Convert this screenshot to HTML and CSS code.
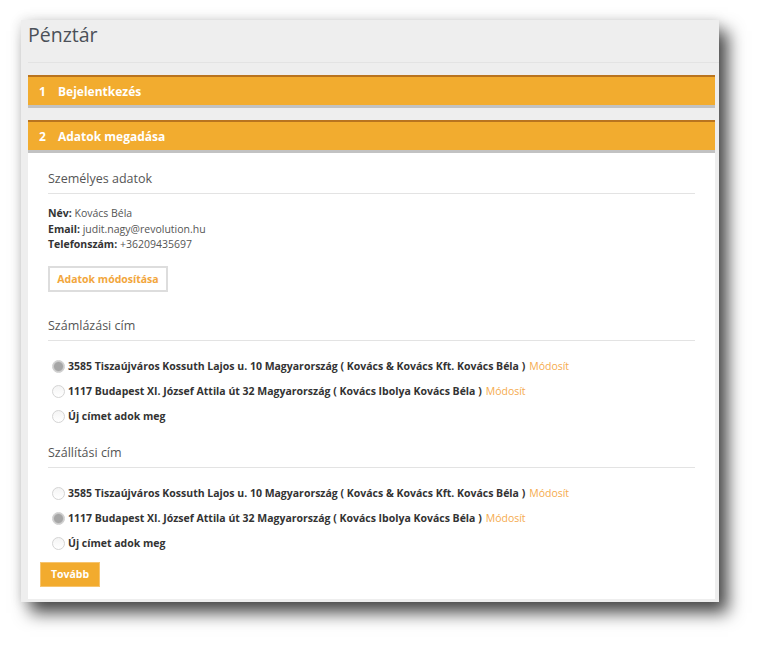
FILE: index.html
```html
<!DOCTYPE html>
<html lang="hu">
<head>
    <meta charset="UTF-8">
    <title>Pénztár</title>
    <link rel="stylesheet" href="styles.css">
</head>
<body>

    <div class="frame">
        <div class="page-title">Pénztár</div>

        <div class="step-bar">
            <span class="step-num">1</span>
            <span class="step-name">Bejelentkezés</span>
        </div>

        <div class="step-bar">
            <span class="step-num">2</span>
            <span class="step-name">Adatok megadása</span>
        </div>

        <div class="step-content">
            <div class="section">
                <h2 class="section-title">Személyes adatok</h2>
                <div class="info">
                    <div><b>Név:</b> Kovács Béla</div>
                    <div><b>Email:</b> judit.nagy@revolution.hu</div>
                    <div><b>Telefonszám:</b> +36209435697</div>
                </div>
                <button class="btn-outline">Adatok módosítása</button>

                <h2 class="section-title spaced">Számlázási cím</h2>
                <div class="address-list">
                    <label class="address">
                        <span class="radio checked"></span>
                        <span class="address-text">3585 Tiszaújváros Kossuth Lajos u. 10 Magyarország ( Kovács &amp; Kovács Kft. Kovács Béla )</span>
                        <a class="edit-link">Módosít</a>
                    </label>
                    <label class="address">
                        <span class="radio"></span>
                        <span class="address-text">1117 Budapest XI. József Attila út 32 Magyarország ( Kovács Ibolya Kovács Béla )</span>
                        <a class="edit-link">Módosít</a>
                    </label>
                    <label class="address">
                        <span class="radio"></span>
                        <span class="address-text">Új címet adok meg</span>
                    </label>
                </div>

                <h2 class="section-title spaced-sm">Szállítási cím</h2>
                <div class="address-list">
                    <label class="address">
                        <span class="radio"></span>
                        <span class="address-text">3585 Tiszaújváros Kossuth Lajos u. 10 Magyarország ( Kovács &amp; Kovács Kft. Kovács Béla )</span>
                        <a class="edit-link">Módosít</a>
                    </label>
                    <label class="address">
                        <span class="radio checked"></span>
                        <span class="address-text">1117 Budapest XI. József Attila út 32 Magyarország ( Kovács Ibolya Kovács Béla )</span>
                        <a class="edit-link">Módosít</a>
                    </label>
                    <label class="address">
                        <span class="radio"></span>
                        <span class="address-text">Új címet adok meg</span>
                    </label>
                </div>
            </div>

            <button class="btn-primary">Tovább</button>
        </div>
    </div>

</body>
</html>
```

FILE: styles.css
```css
body {
    margin: 0;
    min-height: 646px;
    background-color: #ffffff;
    font-family: "Open Sans", Arial, sans-serif;
    color: #555;
}
.frame {
    width: 687px;
    margin: 20px 0 0 21px;
    padding: 0 4px 3px 7px;
    background-color: #eeeeee;
    box-shadow: 0 0 12px rgba(0, 0, 0, 0.12), 9px 11px 16px rgba(0, 0, 0, 0.7);
}
.page-title {
    height: 42px;
    line-height: 30px;
    font-size: 19.5px;
    color: #4b5058;
    border-bottom: 1px solid #e3e3e3;
    margin-right: -4px;
}
.step-bar {
    display: flex;
    align-items: center;
    height: 28px;
    margin-top: 12px;
    padding-left: 11px;
    background-color: #f2ac2f;
    border-top: 2px solid #b9741f;
    border-bottom: 3px solid #c2c2c2;
    color: #fff;
    font-size: 12px;
    font-weight: bold;
}
.step-num {
    width: 19px;
}
.step-content {
    background-color: #fff;
    padding: 0 20px 12px 12px;
}
.section {
    padding-left: 8px;
}
.section-title {
    margin: 0;
    padding: 16px 0 4px;
    font-size: 12.5px;
    font-weight: normal;
    line-height: 20px;
    color: #555;
    border-bottom: 1px solid #e3e3e3;
}
.section-title.spaced {
    padding-top: 24px;
}
.section-title.spaced-sm {
    padding-top: 14px;
}
.info {
    margin-top: 12px;
    font-size: 10.5px;
    line-height: 15.5px;
    color: #555;
}
.info b {
    color: #333;
}
.btn-outline {
    margin-top: 13px;
    width: 120px;
    height: 26px;
    padding: 0;
    border: 2px solid #dddddd;
    background: #fff;
    color: #f2a63c;
    font-family: "Open Sans", Arial, sans-serif;
    font-size: 10.5px;
    font-weight: bold;
    cursor: pointer;
}
.address-list {
    margin-top: 13px;
}
.address {
    display: flex;
    align-items: center;
    height: 25px;
    font-size: 10.5px;
}
.radio {
    width: 11px;
    height: 11px;
    margin: 0 3px 0 4px;
    border: 1px solid #d4d4d4;
    border-radius: 50%;
    background: linear-gradient(#f4f4f4, #ffffff);
}
.radio.checked {
    border-color: #cfcfcf;
    background: radial-gradient(circle, #a6a6a6 0, #a6a6a6 4px, #c9c9c9 5px, #e4e4e4 6px);
}
.address-text {
    font-weight: bold;
    color: #333;
}
.edit-link {
    margin-left: 4px;
    color: #f5ab4e;
    cursor: pointer;
}
.btn-primary {
    display: block;
    margin-top: 6px;
    width: 60px;
    height: 25px;
    padding: 0;
    border: 1px solid #f7c46e;
    background-color: #f2ab2e;
    color: #fff;
    font-family: "Open Sans", Arial, sans-serif;
    font-size: 10.5px;
    font-weight: bold;
    cursor: pointer;
}
```
